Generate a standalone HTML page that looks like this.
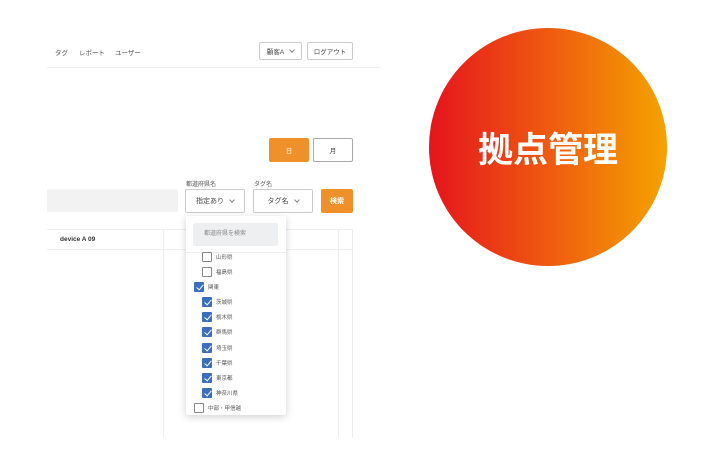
<!DOCTYPE html><html><head><meta charset="utf-8"><style>
body{margin:0;width:708px;height:475px;background:#fff;position:relative;overflow:hidden;font-family:"Liberation Sans","Noto Sans CJK JP",sans-serif;color:#444}
.a{position:absolute}
.t{font-size:6.5px;color:#555;white-space:nowrap}
.btn{position:absolute;border:1px solid #ccc;border-radius:2px;box-sizing:border-box;font-size:6.5px;display:flex;align-items:center;justify-content:center;color:#444;background:#fff}
.or{background:#f0902a;border-color:#f0902a;color:#fff}
.cb{position:absolute;width:10px;height:10px;box-sizing:border-box;border:1px solid #888;border-radius:1px;background:#fff}
.ck{background:#3a6fc0;border-color:#3a6fc0}
.ck::after{content:"";position:absolute;left:3px;top:0px;width:3px;height:6px;border:solid #fff;border-width:0 1.5px 1.5px 0;transform:rotate(40deg)}
.chev{display:inline-block;width:3px;height:3px;border:solid #888;border-width:0 1px 1px 0;transform:rotate(45deg);margin-left:6px;margin-top:-3px}
</style></head><body>
<div class="a t" style="left:55px;top:47px">タグ</div>
<div class="a t" style="left:79px;top:47px">レポート</div>
<div class="a t" style="left:115px;top:47px">ユーザー</div>
<div class="btn" style="left:259px;top:42px;width:43px;height:18px">顧客A<span class="chev"></span></div>
<div class="btn" style="left:307px;top:42px;width:46px;height:18px">ログアウト</div>
<div class="a" style="left:47px;top:67px;width:333px;height:1px;background:#eee"></div>
<div class="btn or" style="left:269px;top:138px;width:40px;height:24px">日</div>
<div class="btn" style="left:313px;top:138px;width:40px;height:24px;border-color:#aaa">月</div>
<div class="a t" style="left:186px;top:179px;font-size:6px">都道府県名</div>
<div class="a t" style="left:254px;top:179px;font-size:6px">タグ名</div>
<div class="a" style="left:47px;top:189px;width:131px;height:23px;background:#f2f2f2;border-radius:2px"></div>
<div class="btn" style="left:185px;top:189px;width:60px;height:24px;font-size:7px">指定あり<span class="chev"></span></div>
<div class="btn" style="left:253px;top:189px;width:60px;height:24px;font-size:7px">タグ名<span class="chev"></span></div>
<div class="btn or" style="left:321px;top:189px;width:32px;height:24px;font-size:7px;font-weight:bold">検索</div>
<div class="a" style="left:47px;top:229px;width:305px;height:208px;border:1px solid #eee;border-left:none;border-bottom:none"></div>
<div class="a" style="left:47px;top:249px;width:305px;height:1px;background:#eee"></div>
<div class="a" style="left:163px;top:229px;width:1px;height:208px;background:#eee"></div>
<div class="a" style="left:338px;top:229px;width:1px;height:208px;background:#eee"></div>
<div class="a t" style="left:60px;top:236px;font-weight:bold;font-size:6.5px;color:#333">device A 09</div>
<div class="a" style="left:186px;top:216px;width:100px;height:199px;background:#fff;box-shadow:0 2px 8px rgba(0,0,0,.18);border-radius:2px"></div>
<div class="a t" style="left:193px;top:223px;width:85px;height:23px;background:#eeeff1;border-radius:2px;line-height:23px;text-indent:11px;color:#888;font-size:6px">都道府県を検索</div>
<div class="a" style="left:186px;top:252px;width:100px;height:1px;background:#eee"></div>
<div class="cb" style="left:202px;top:252px"></div><div class="a t" style="left:216px;top:253px;font-size:5.5px">山形県</div>
<div class="cb" style="left:202px;top:267px"></div><div class="a t" style="left:216px;top:268px;font-size:5.5px">福島県</div>
<div class="cb ck" style="left:194px;top:282px"></div><div class="a t" style="left:208px;top:283px;font-size:5.5px">関東</div>
<div class="cb ck" style="left:202px;top:297px"></div><div class="a t" style="left:216px;top:298px;font-size:5.5px">茨城県</div>
<div class="cb ck" style="left:202px;top:312px"></div><div class="a t" style="left:216px;top:313px;font-size:5.5px">栃木県</div>
<div class="cb ck" style="left:202px;top:327px"></div><div class="a t" style="left:216px;top:328px;font-size:5.5px">群馬県</div>
<div class="cb ck" style="left:202px;top:343px"></div><div class="a t" style="left:216px;top:344px;font-size:5.5px">埼玉県</div>
<div class="cb ck" style="left:202px;top:358px"></div><div class="a t" style="left:216px;top:359px;font-size:5.5px">千葉県</div>
<div class="cb ck" style="left:202px;top:373px"></div><div class="a t" style="left:216px;top:374px;font-size:5.5px">東京都</div>
<div class="cb ck" style="left:202px;top:388px"></div><div class="a t" style="left:216px;top:389px;font-size:5.5px">神奈川県</div>
<div class="cb" style="left:194px;top:403px"></div><div class="a t" style="left:208px;top:404px;font-size:5.5px">中部・甲信越</div>
<div class="a" style="left:429px;top:28px;width:238px;height:238px;border-radius:50%;background:linear-gradient(90deg,#e5141d,#ef5a10 50%,#f5a300);display:flex;align-items:center;justify-content:center;color:#fff;font-size:35px;font-weight:bold;font-family:'Noto Sans CJK JP',sans-serif">拠点管理</div>
</body></html>
